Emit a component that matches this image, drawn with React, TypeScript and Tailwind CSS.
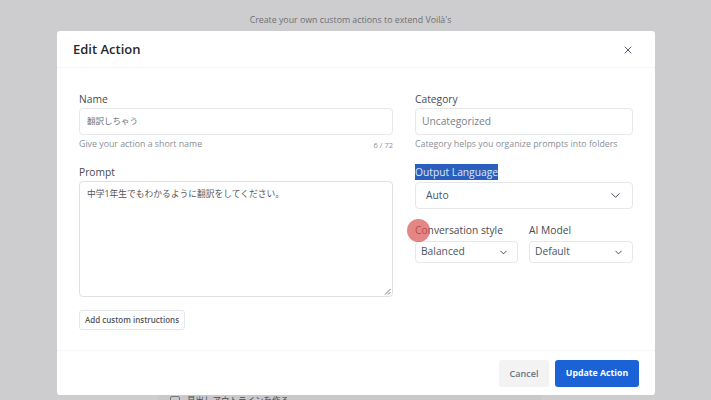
import { ChevronDown, X } from "lucide-react";

const cjk = "font-['Open_Sans','Noto_Sans_CJK_JP',sans-serif]";

function Select({ label }: { label: string }) {
  return (
    <div className="flex h-[22px] items-center justify-between rounded-[4px] border border-[#e5e7eb] pl-[5px] pr-[8px] text-[10.25px] text-[#4b5563]">
      {label}
      <ChevronDown className="h-[11px] w-[11px] text-[#374151]" strokeWidth={2} />
    </div>
  );
}

export default function App() {
  return (
    <div className={`${cjk} relative h-[400px] w-[711px] overflow-hidden bg-[#cdcdcf]`}>
      <div className="pr-[10px] pt-[14px] text-center text-[8.8px] leading-[12px] text-[#6f6f72]">
        Create your own custom actions to extend Voilà's
      </div>

      {/* page behind the modal */}
      <div className="absolute left-[158px] top-[395px] h-[5px] w-[384px] overflow-hidden bg-[#c9c9cb]">
        <div className="flex items-start gap-[7px] pl-[12px] text-[8.5px] leading-[10px] text-[#4b4b4d]">
          <span className="mt-[1px] h-[10px] w-[10px] rounded-[2px] border border-[#77777a]" />
          見出しアウトラインを作る
        </div>
      </div>

      <div className="absolute left-[57px] top-[31px] flex h-[364px] w-[598px] flex-col rounded-[3px] bg-white">
        <div className="flex h-[37px] items-center justify-between border-b border-dotted border-[#f0f0f0] pl-[16px] pr-[21px] pt-[2px]">
          <h2 className="text-[13px] font-semibold text-[#27272a]">Edit Action</h2>
          <X className="h-[12px] w-[12px] text-[#374151]" strokeWidth={1.75} />
        </div>

        <div className="flex h-[283px] gap-[22px] border-b border-dotted border-[#f0f0f0] pl-[22px] pr-[22px] pt-[24px]">
          <div className="w-[314px]">
            <label className="block text-[10.25px] leading-[14px] text-[#4b4b4f]">Name</label>
            <div className="mt-[2px] flex h-[27px] items-center rounded-[4px] border border-[#e5e7eb] px-[7px] text-[8.5px] text-[#6b7280]">
              翻訳しちゃう
            </div>
            <div className="mt-[3px] flex justify-between text-[8.8px] leading-[12px] text-[#8a8f98]">
              <span>Give your action a short name</span>
              <span className="pt-[1px] text-[7.5px]">6 / 72</span>
            </div>
            <label className="mt-[14px] block text-[10.25px] leading-[14px] text-[#4b4b4f]">Prompt</label>
            <div className="relative mt-[2px] h-[116px] rounded-[4px] border border-[#e0e0e0] px-[7px] py-[5px] text-[8.75px] leading-[15px] text-[#55555a]">
              中学1年生でもわかるように翻訳をしてください。
              <svg className="absolute bottom-[1px] right-[1px]" width="7" height="7" viewBox="0 0 7 7" fill="none" stroke="#777">
                <path d="M1 6.5 6.5 1M4 6.5 6.5 4" />
              </svg>
            </div>
            <button className="mt-[13px] flex h-[20px] w-[106px] items-center justify-center rounded-[3px] border border-[#e5e7eb] text-[8px] font-semibold text-[#55555a]">
              Add custom instructions
            </button>
          </div>

          <div className="w-[218px]">
            <label className="block text-[10.25px] leading-[14px] text-[#4b4b4f]">Category</label>
            <div className="mt-[2px] flex h-[27px] items-center rounded-[4px] border border-[#e5e7eb] px-[6px] text-[10.25px] text-[#7b7f87]">
              Uncategorized
            </div>
            <div className="mt-[3px] text-[8.8px] leading-[12px] text-[#8a8f98]">
              Category helps you organize prompts into folders
            </div>
            <label className="mt-[14px] block h-[16px] w-fit bg-[#2a5fbd] text-[10.25px] leading-[16px] text-[#dbe7fa]">
              Output Language
            </label>
            <div className="mt-[2px] flex h-[27px] items-center justify-between rounded-[4px] border border-[#e5e7eb] pl-[10px] pr-[9px] text-[10.25px] text-[#4b5563]">
              Auto
              <ChevronDown className="h-[15px] w-[15px] text-[#374151]" strokeWidth={1.5} />
            </div>
            <div className="mt-[14px] grid grid-cols-[103px_104px] gap-[11px]">
              <div>
                <label className="mb-[4px] block text-[10.25px] leading-[14px] text-[#4b4b4f]">Conversation style</label>
                <Select label="Balanced" />
              </div>
              <div>
                <label className="mb-[4px] block text-[10.25px] leading-[14px] text-[#4b4b4f]">AI Model</label>
                <Select label="Default" />
              </div>
            </div>
          </div>
        </div>

        <div className="flex flex-1 items-start justify-end gap-[6px] pr-[16px] pt-[9px]">
          <button className="flex h-[27px] w-[50px] items-center justify-center rounded-[3px] bg-[#f3f3f3] text-[9px] font-semibold text-[#6b7280]">
            Cancel
          </button>
          <button className="flex h-[27px] w-[84px] items-center justify-center rounded-[3px] bg-[#1a62d6] text-[8.75px] font-bold text-white">
            Update Action
          </button>
        </div>
      </div>

      {/* cursor highlight */}
      <div className="absolute left-[407px] top-[219px] h-[23px] w-[23px] rounded-full bg-[#d9534f]/70" />
    </div>
  );
}
